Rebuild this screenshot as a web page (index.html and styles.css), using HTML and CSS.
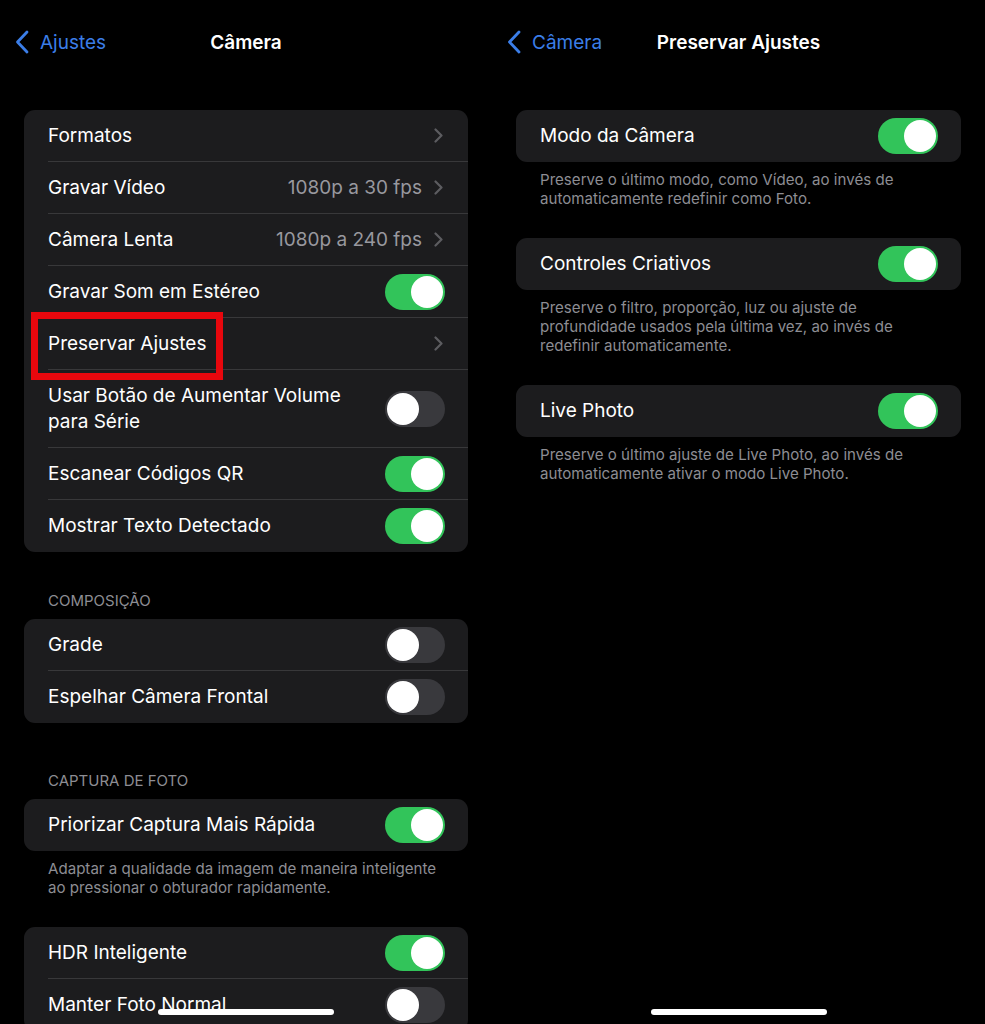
FILE: index.html
```html
<!DOCTYPE html>
<html lang="pt-BR">
<head>
    <meta charset="UTF-8">
    <title>Câmera</title>
    <link rel="stylesheet" href="styles.css">
</head>
<body>

<div class="telas">

    <!-- Tela Câmera -->
    <div class="painel">
        <div class="nav">
            <div class="voltar">
                <svg class="voltar-seta" width="14" height="24" viewBox="0 0 14 24"><path d="M12 2 L2.5 12 L12 22" fill="none" stroke="currentColor" stroke-width="2.8" stroke-linecap="round" stroke-linejoin="round"/></svg>
                <span>Ajustes</span>
            </div>
            <div class="titulo">Câmera</div>
            <div></div>
        </div>

        <div class="grupo primeiro">
            <div class="linha"><div class="linha-corpo"><span class="rotulo">Formatos</span><span class="detalhe"><svg class="seta" width="9" height="15" viewBox="0 0 9 15"><path d="M1.5 1.5 L7.5 7.5 L1.5 13.5" fill="none" stroke="currentColor" stroke-width="2.2" stroke-linecap="round" stroke-linejoin="round"/></svg></span></div></div>
            <div class="linha"><div class="linha-corpo"><span class="rotulo">Gravar Vídeo</span><span class="detalhe"><span class="valor">1080p a 30 fps</span><svg class="seta" width="9" height="15" viewBox="0 0 9 15"><path d="M1.5 1.5 L7.5 7.5 L1.5 13.5" fill="none" stroke="currentColor" stroke-width="2.2" stroke-linecap="round" stroke-linejoin="round"/></svg></span></div></div>
            <div class="linha"><div class="linha-corpo"><span class="rotulo">Câmera Lenta</span><span class="detalhe"><span class="valor">1080p a 240 fps</span><svg class="seta" width="9" height="15" viewBox="0 0 9 15"><path d="M1.5 1.5 L7.5 7.5 L1.5 13.5" fill="none" stroke="currentColor" stroke-width="2.2" stroke-linecap="round" stroke-linejoin="round"/></svg></span></div></div>
            <div class="linha"><div class="linha-corpo"><span class="rotulo">Gravar Som em Estéreo</span><span class="chave ligada"></span></div></div>
            <div class="linha"><div class="linha-corpo"><span class="rotulo destaque">Preservar Ajustes</span><span class="detalhe"><svg class="seta" width="9" height="15" viewBox="0 0 9 15"><path d="M1.5 1.5 L7.5 7.5 L1.5 13.5" fill="none" stroke="currentColor" stroke-width="2.2" stroke-linecap="round" stroke-linejoin="round"/></svg></span></div></div>
            <div class="linha"><div class="linha-corpo alta"><span class="rotulo">Usar Botão de Aumentar Volume<br>para Série</span><span class="chave"></span></div></div>
            <div class="linha"><div class="linha-corpo"><span class="rotulo">Escanear Códigos QR</span><span class="chave ligada"></span></div></div>
            <div class="linha"><div class="linha-corpo"><span class="rotulo">Mostrar Texto Detectado</span><span class="chave ligada"></span></div></div>
        </div>

        <div class="cabecalho cab-composicao">COMPOSIÇÃO</div>
        <div class="grupo">
            <div class="linha"><div class="linha-corpo"><span class="rotulo">Grade</span><span class="chave"></span></div></div>
            <div class="linha"><div class="linha-corpo"><span class="rotulo">Espelhar Câmera Frontal</span><span class="chave"></span></div></div>
        </div>

        <div class="cabecalho cab-captura">CAPTURA DE FOTO</div>
        <div class="grupo">
            <div class="linha"><div class="linha-corpo"><span class="rotulo">Priorizar Captura Mais Rápida</span><span class="chave ligada"></span></div></div>
        </div>
        <p class="rodape">Adaptar a qualidade da imagem de maneira inteligente<br>ao pressionar o obturador rapidamente.</p>

        <div class="grupo">
            <div class="linha"><div class="linha-corpo"><span class="rotulo">HDR Inteligente</span><span class="chave ligada"></span></div></div>
            <div class="linha"><div class="linha-corpo"><span class="rotulo">Manter Foto Normal</span><span class="chave"></span></div></div>
        </div>

        <div class="barra-home"></div>
    </div>

    <!-- Tela Preservar Ajustes -->
    <div class="painel">
        <div class="nav">
            <div class="voltar">
                <svg class="voltar-seta" width="14" height="24" viewBox="0 0 14 24"><path d="M12 2 L2.5 12 L12 22" fill="none" stroke="currentColor" stroke-width="2.8" stroke-linecap="round" stroke-linejoin="round"/></svg>
                <span>Câmera</span>
            </div>
            <div class="titulo">Preservar Ajustes</div>
            <div></div>
        </div>

        <div class="grupo primeiro">
            <div class="linha"><div class="linha-corpo"><span class="rotulo">Modo da Câmera</span><span class="chave ligada"></span></div></div>
        </div>
        <p class="rodape">Preserve o último modo, como Vídeo, ao invés de<br>automaticamente redefinir como Foto.</p>

        <div class="grupo">
            <div class="linha"><div class="linha-corpo"><span class="rotulo">Controles Criativos</span><span class="chave ligada"></span></div></div>
        </div>
        <p class="rodape">Preserve o filtro, proporção, luz ou ajuste de<br>profundidade usados pela última vez, ao invés de<br>redefinir automaticamente.</p>

        <div class="grupo">
            <div class="linha"><div class="linha-corpo"><span class="rotulo">Live Photo</span><span class="chave ligada"></span></div></div>
        </div>
        <p class="rodape">Preserve o último ajuste de Live Photo, ao invés de<br>automaticamente ativar o modo Live Photo.</p>

        <div class="barra-home"></div>
    </div>

</div>

</body>
</html>
```

FILE: styles.css
```css
body {
    margin: 0;
    background-color: #000000;
    color: #ffffff;
    font-family: Inter, "Noto Sans", sans-serif;
    overflow: hidden;
}

.telas {
    display: flex;
    width: 985px;
    height: 1024px;
}

.painel {
    position: relative;
    width: 492px;
    padding: 0 24px;
    box-sizing: border-box;
    height: 1024px;
    overflow: hidden;
}

.painel + .painel {
    width: 493px;
}

/* barra de navegação */
.nav {
    display: grid;
    grid-template-columns: 1fr auto 1fr;
    align-items: center;
    height: 84px;
    margin: 0 -24px;
    padding: 0 15px;
}

.voltar {
    display: flex;
    align-items: center;
    gap: 11px;
    color: #3b7ee8;
    font-size: 19px;
}

.voltar-seta {
    display: block;
}

.titulo {
    font-size: 19px;
    font-weight: 600;
}

/* grupos */
.grupo {
    background-color: #1c1c1e;
    border-radius: 11px;
    overflow: hidden;
}

.grupo.primeiro {
    margin-top: 26px;
}

.linha {
    padding-left: 24px;
}

.linha-corpo {
    display: flex;
    align-items: center;
    justify-content: space-between;
    min-height: 52px;
    padding-right: 23px;
    border-bottom: 1px solid #38383a;
    box-sizing: border-box;
}

.linha:last-child .linha-corpo {
    border-bottom: none;
}

.linha-corpo.alta {
    min-height: 78px;
}

.rotulo {
    font-size: 19px;
    line-height: 26px;
}

.destaque {
    position: relative;
}

.destaque::after {
    content: "";
    position: absolute;
    left: -17px;
    top: -19px;
    width: 178px;
    height: 54px;
    border: 7px solid #e8070d;
}

.detalhe {
    display: flex;
    align-items: center;
    gap: 12px;
    color: #5c5c60;
}

.valor {
    color: #98989e;
    font-size: 19px;
}

.seta {
    display: block;
    margin-right: 2px;
}

/* interruptor */
.chave {
    position: relative;
    width: 60px;
    height: 36px;
    border-radius: 18px;
    background-color: #39393d;
    flex-shrink: 0;
}

.chave::after {
    content: "";
    position: absolute;
    top: 2px;
    left: 2px;
    width: 32px;
    height: 32px;
    border-radius: 50%;
    background-color: #ffffff;
}

.chave.ligada {
    background-color: #32c45a;
}

.chave.ligada::after {
    left: 26px;
}

/* textos */
.cabecalho {
    color: #8d8d93;
    font-size: 15px;
    line-height: 18px;
    padding: 0 24px 9px;
}

.cab-composicao {
    margin-top: 40px;
}

.cab-captura {
    margin-top: 49px;
}

.rodape {
    color: #8d8d93;
    font-size: 15.1px;
    line-height: 19px;
    margin: 8px 0 30px;
    padding: 0 24px;
}

.barra-home {
    position: absolute;
    left: 50%;
    bottom: 9px;
    width: 176px;
    height: 6px;
    margin-left: -88px;
    border-radius: 3px;
    background-color: #ffffff;
}
```
